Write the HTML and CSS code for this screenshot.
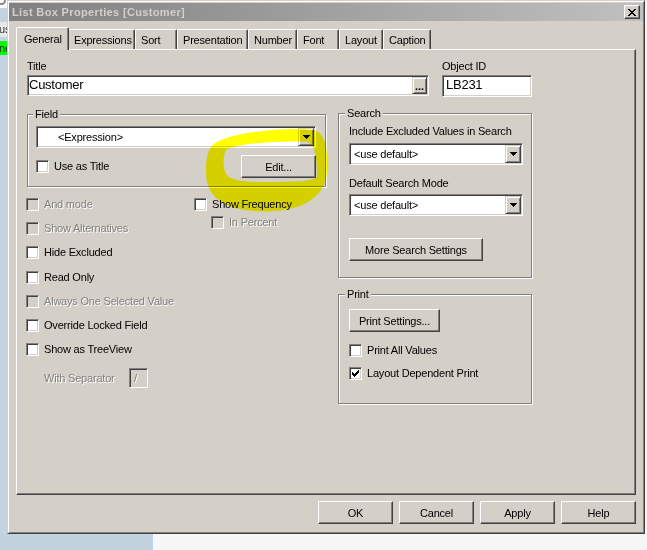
FILE: index.html
```html
<!DOCTYPE html>
<html>
<head>
<meta charset="utf-8">
<title>List Box Properties</title>
<link rel="stylesheet" href="styles.css">
</head>
<body>
<div class="backwin">
  <div class="bw-top"><span class="bw-icon"></span></div>
  <div class="bw-blue"></div>
  <div class="bw-label">us</div>
  <div class="bw-green">ne</div>
</div>

<div class="dialog">
  <div class="titlebar">
    <span class="title-text">List Box Properties [Customer]</span>
    <span class="close-btn"><svg width="8" height="7" viewBox="0 0 8 7" shape-rendering="crispEdges"><path d="M0 0h2v1h1v1h2v-1h1v-1h2v1h-1v1h-1v1h-1v1h1v1h1v1h1v1h-2v-1h-1v-1h-2v1h-1v1h-2v-1h1v-1h1v-1h1v-1h-1v-1h-1v-1h-1z" fill="#000"/></svg></span>
  </div>
  <div class="main">
    <div class="tabs">
      <div class="tab active">General</div>
      <div class="tab">Expressions</div>
      <div class="tab">Sort</div>
      <div class="tab">Presentation</div>
      <div class="tab">Number</div>
      <div class="tab">Font</div>
      <div class="tab">Layout</div>
      <div class="tab">Caption</div>
    </div>
    <div class="panel">
      <div class="top-row">
        <div class="title-col">
          <div class="lbl">Title</div>
          <div class="sunken title-input"><span class="input-text">Customer</span><span class="dots-btn">...</span></div>
        </div>
        <div class="id-col">
          <div class="lbl">Object ID</div>
          <div class="sunken id-input"><span class="input-text id-text">LB231</span></div>
        </div>
      </div>

      <div class="body-grid">
        <div class="left-col">
          <div class="group field-group">
            <div class="legend field-legend">Field</div>
            <div class="sunken combo field-combo">
              <span class="combo-text expr">&lt;Expression&gt;</span>
              <span class="drop-btn"><svg width="7" height="4" viewBox="0 0 7 4" shape-rendering="crispEdges"><path d="M0 0h7v1h-1v1h-1v1h-1v1h-1v-1h-1v-1h-1v-1h-1z" fill="#000"/></svg></span>
            </div>
            <div class="field-row">
              <div class="check"><span class="cb"></span>Use as Title</div>
              <div class="btn edit-btn">Edit...</div>
            </div>
          </div>

          <div class="opts">
            <div class="opts-left">
              <div class="crow dis"><span class="cb off"></span>And mode</div>
              <div class="crow dis"><span class="cb off"></span>Show Alternatives</div>
              <div class="crow"><span class="cb"></span>Hide Excluded</div>
              <div class="crow"><span class="cb"></span>Read Only</div>
              <div class="crow dis"><span class="cb off"></span>Always One Selected Value</div>
              <div class="crow"><span class="cb"></span>Override Locked Field</div>
              <div class="crow"><span class="cb"></span>Show as TreeView</div>
              <div class="sep-row dis"><span class="sep-label">With Separator</span><span class="sunken sep-input">/</span></div>
            </div>
            <div class="opts-right">
              <div class="crow"><span class="cb"></span>Show Frequency</div>
              <div class="crow sub dis"><span class="cb off"></span>In Percent</div>
            </div>
          </div>
        </div>

        <div class="right-col">
          <div class="group search-group">
            <div class="legend legend-r">Search</div>
            <div class="slbl">Include Excluded Values in Search</div>
            <div class="sunken combo scombo">
              <span class="combo-text use-default">&lt;use default&gt;</span>
              <span class="drop-btn"><svg width="7" height="4" viewBox="0 0 7 4" shape-rendering="crispEdges"><path d="M0 0h7v1h-1v1h-1v1h-1v1h-1v-1h-1v-1h-1v-1h-1z" fill="#000"/></svg></span>
            </div>
            <div class="slbl second">Default Search Mode</div>
            <div class="sunken combo scombo second">
              <span class="combo-text use-default">&lt;use default&gt;</span>
              <span class="drop-btn"><svg width="7" height="4" viewBox="0 0 7 4" shape-rendering="crispEdges"><path d="M0 0h7v1h-1v1h-1v1h-1v1h-1v-1h-1v-1h-1v-1h-1z" fill="#000"/></svg></span>
            </div>
            <div class="btn more-btn">More Search Settings</div>
          </div>

          <div class="group print-group">
            <div class="legend legend-r">Print</div>
            <div class="btn print-btn">Print Settings...</div>
            <div class="crow prow"><span class="cb"></span>Print All Values</div>
            <div class="crow prow"><span class="cb"><svg width="7" height="7" viewBox="0 0 7 7" shape-rendering="crispEdges"><path d="M0 2H1V3H2V4H3V3H4V2H5V1H6V0H7V3H6V4H5V5H4V6H3V7H2V6H1V5H0Z" fill="#000"/></svg></span>Layout Dependent Print</div>
          </div>
        </div>
      </div>
    </div>

    <div class="buttons">
      <div class="btn dbtn">OK</div>
      <div class="btn dbtn">Cancel</div>
      <div class="btn dbtn">Apply</div>
      <div class="btn dbtn">Help</div>
    </div>
  </div>
</div>

<svg class="highlight" width="647" height="550" viewBox="0 0 647 550">
  <path fill="#ffff00" fill-rule="evenodd" d="M212 146 C222 133 290 126 314 130 C326 134 328 150 327 170 C326 188 318 198 300 206 C280 213 250 213 232 207 C214 200 206 190 206 172 C206 160 207 152 212 146 Z M226 150 C236 143 290 140 308 142 C316 146 317 160 317 176 C316 181 300 182 265 182 C240 182 228 180 225 172 C223 164 223 155 226 150 Z"/>
</svg>
</body>
</html>
```

FILE: styles.css
```css
* { box-sizing: border-box; }
html, body { margin: 0; padding: 0; }
body {
  width: 647px;
  height: 550px;
  overflow: hidden;
  position: relative;
  background: #f7f7f7;
  font-family: "Liberation Sans", Arial, sans-serif;
  font-size: 11px;
  letter-spacing: -0.2px;
  color: #000;
}

/* window behind the dialog */
.backwin {
  position: absolute;
  left: 0;
  top: 0;
  width: 153px;
  height: 550px;
  background: #c2d2de;
  z-index: 0;
}
.bw-top { height: 8px; background: #fafafa; overflow: hidden; }
.bw-icon {
  display: block;
  width: 9px;
  height: 9px;
  margin: -4px 0 0 -3px;
  border: 2px solid #8a8a8a;
  border-radius: 50%;
}
.bw-blue { height: 14px; }
.bw-label {
  height: 15px;
  background: #e8e8e8;
  line-height: 15px;
  text-indent: -1px;
  color: #333;
}
.bw-green {
  margin-top: 4px;
  height: 14px;
  background: #00ff00;
  line-height: 14px;
  color: #222;
  text-indent: -1px;
}

/* dialog frame */
.dialog {
  position: relative;
  z-index: 1;
  margin-left: 7px;
  width: 638px;
  height: 534px;
  background: #d4d0c8;
  border: 1px solid;
  border-color: #d4d0c8 #404040 #404040 #d4d0c8;
  box-shadow: inset 1px 1px 0 #fff, inset -1px -1px 0 #808080;
  padding: 2px 1px 1px 1px;
}
.titlebar {
  height: 18px;
  display: flex;
  align-items: center;
  justify-content: space-between;
  padding: 0 3px;
  background: linear-gradient(to right, #808080, #c0c0c0);
}
.title-text {
  color: #d4d0c8;
  font-weight: bold;
  letter-spacing: 0.35px;
  white-space: nowrap;
}
.close-btn {
  width: 16px;
  height: 14px;
  display: flex;
  align-items: center;
  justify-content: center;
  background: #d4d0c8;
  border: 1px solid;
  border-color: #fff #404040 #404040 #fff;
  box-shadow: inset -1px -1px 0 #808080;
}

.main { padding: 6px 7px 0 7px; }

/* tabs */
.tabs {
  display: grid;
  grid-template-columns: 50px 67px 42px 71px 49px 42px 44px 48px;
  height: 22px;
  align-items: end;
  padding-left: 2px;
}
.tab {
  height: 20px;
  display: flex;
  align-items: center;
  padding: 1px 0 0 5px;
  border: 1px solid;
  border-bottom: none;
  border-color: #fff #404040 transparent #fff;
  box-shadow: inset -1px 0 0 #808080;
  border-radius: 2px 2px 0 0;
  white-space: nowrap;
}
.tab.active {
  height: 23px;
  margin: 0 -1px -1px -2px;
  padding: 0 0 1px 7px;
  position: relative;
  z-index: 1;
  background: #d4d0c8;
}

.panel {
  height: 446px;
  background: #d4d0c8;
  border: 1px solid;
  border-color: #fff #404040 #404040 #fff;
  box-shadow: inset -1px -1px 0 #808080;
  padding: 10px 0 0 10px;
}

/* common controls */
.sunken {
  border: 1px solid;
  border-color: #808080 #fff #fff #808080;
  box-shadow: inset 1px 1px 0 #404040, inset -1px -1px 0 #d4d0c8;
  background: #fff;
}
.raised {
  border: 1px solid;
}
.btn {
  display: flex;
  align-items: center;
  justify-content: center;
  height: 23px;
  background: #d4d0c8;
  border: 1px solid;
  border-color: #fff #404040 #404040 #fff;
  box-shadow: inset -1px -1px 0 #808080;
  white-space: nowrap;
}
.cb {
  flex: none;
  display: flex;
  align-items: center;
  justify-content: center;
  width: 13px;
  height: 13px;
  margin-right: 5px;
  border: 1px solid;
  border-color: #808080 #fff #fff #808080;
  box-shadow: inset 1px 1px 0 #404040, inset -1px -1px 0 #d4d0c8;
  background: #fff;
}
.cb.off { background: #d4d0c8; }
.dis { color: #808080; text-shadow: 1px 1px 0 #fff; }

/* top row */
.top-row { display: flex; gap: 13px; }
.title-col { width: 402px; }
.id-col { width: 90px; }
.lbl { line-height: 13px; margin-bottom: 2px; white-space: nowrap; }
.title-input, .id-input { display: flex; padding: 1px; }
.title-input { height: 21px; }
.id-input { height: 22px; }
.input-text {
  flex: 1;
  font-size: 13px;
  line-height: 13px;
  letter-spacing: -0.25px;
  padding-top: 1px;
}
.id-text { padding-left: 2px; }
.dots-btn {
  width: 15px;
  display: flex;
  align-items: flex-end;
  justify-content: center;
  padding-bottom: 2px;
  line-height: 9px;
  font-weight: bold;
  letter-spacing: 0;
  background: #d4d0c8;
  border: 1px solid;
  border-color: #d4d0c8 #404040 #404040 #d4d0c8;
  box-shadow: inset 1px 1px 0 #fff, inset -1px -1px 0 #808080;
}

/* groups */
.body-grid {
  display: grid;
  grid-template-columns: 299px 194px;
  column-gap: 12px;
  margin-top: 17px;
  align-items: start;
}
.right-col { margin-top: -1px; }
.group {
  display: flex;
  flex-direction: column;
  border: 1px solid #808080;
  box-shadow: 1px 1px 0 #fff, inset 1px 1px 0 #fff;
}
.legend {
  align-self: flex-start;
  background: #d4d0c8;
  padding: 0 2px;
  line-height: 13px;
  margin-top: -7px;
}
.field-group { padding: 0 9px 8px 8px; }
.field-legend { margin-left: -3px; }
.legend-r { margin-left: -4px; }

.combo { height: 22px; display: flex; padding: 1px; }
.combo-text {
  flex: 1;
  display: flex;
  align-items: center;
  line-height: 13px;
  white-space: nowrap;
}
.expr { padding-left: 20px; }
.use-default { padding-left: 3px; }
.drop-btn {
  width: 16px;
  display: flex;
  align-items: center;
  justify-content: center;
  background: #d4d0c8;
  border: 1px solid;
  border-color: #d4d0c8 #404040 #404040 #d4d0c8;
  box-shadow: inset 1px 1px 0 #fff, inset -1px -1px 0 #808080;
}
.field-combo { margin-top: 5px; }
.field-row {
  margin-top: 7px;
  height: 23px;
  display: flex;
  align-items: center;
  justify-content: space-between;
}
.check { display: flex; align-items: center; white-space: nowrap; line-height: 13px; }
.edit-btn { width: 75px; }

/* checkbox options */
.opts { display: flex; margin-top: 5px; margin-left: -1px; }
.opts-left { width: 168px; }
.crow {
  height: 24.3px;
  display: flex;
  align-items: center;
  line-height: 13px;
  white-space: nowrap;
}
.crow.sub { height: 13px; padding-left: 17px; }
.sep-row {
  margin-top: 5px;
  height: 22px;
  display: flex;
  align-items: center;
  padding-left: 18px;
  white-space: nowrap;
}
.sep-label { width: 85px; }
.sep-input {
  width: 19px;
  height: 20px;
  background: #d4d0c8;
  display: flex;
  align-items: center;
  padding-left: 4px;
  line-height: 13px;
}

/* search & print */
.search-group { padding: 0 8px 16px 10px; }
.slbl { line-height: 13px; margin-top: 5px; white-space: nowrap; }
.slbl.second { margin-top: 12px; }
.scombo { margin-top: 5px; }
.scombo.second { margin-top: 4px; }
.more-btn { width: 134px; margin-top: 22px; align-self: flex-start; }
.print-group { margin-top: 16px; padding: 0 8px 23px 10px; }
.print-btn { width: 91px; margin-top: 8px; align-self: flex-start; }
.prow { height: 13px; margin-top: 12px; }
.prow + .prow { margin-top: 10px; }

/* dialog buttons */
.buttons {
  display: flex;
  justify-content: flex-end;
  gap: 6px;
  margin-top: 6px;
}
.dbtn { width: 75px; }

/* hand-drawn highlight */
.highlight {
  position: absolute;
  left: 0;
  top: 0;
  z-index: 5;
  pointer-events: none;
  mix-blend-mode: multiply;
}
```
